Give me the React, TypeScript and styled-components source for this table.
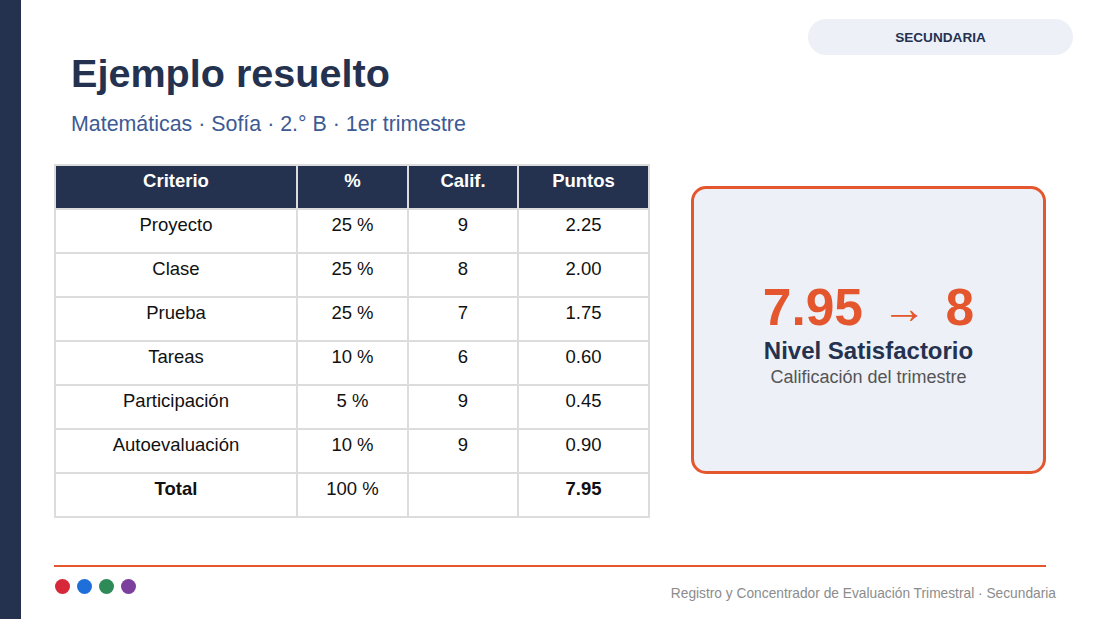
import React from "react";
import styled, { createGlobalStyle } from "styled-components";

const NAVY = "#24324f";
const ORANGE = "#e4572e";

const GlobalStyle = createGlobalStyle`
  html, body { margin: 0; padding: 0; background: #ffffff; }
  body { font-family: "Liberation Sans", Arial, sans-serif; }
  * { box-sizing: border-box; }
`;

const Page = styled.div`
  width: 1100px;
  height: 619px;
  display: flex;
  overflow: hidden;
  background: #ffffff;
`;

const Sidebar = styled.div`
  width: 21px;
  flex: none;
  background: ${NAVY};
`;

const Main = styled.main`
  position: relative;
  flex: 1;
  display: flex;
  flex-direction: column;
  padding: 51px 54px 0 33px;
`;

const Badge = styled.div`
  position: absolute;
  top: 19px;
  right: 27px;
  width: 265px;
  height: 36px;
  border-radius: 18px;
  background: #edf0f7;
  color: ${NAVY};
  font-weight: 700;
  font-size: 13.6px;
  display: flex;
  align-items: center;
  justify-content: center;
`;

const TitleBlock = styled.header`
  padding-left: 17px;
`;

const Title = styled.h1`
  margin: 0;
  font-size: 39.6px;
  line-height: 45px;
  font-weight: 700;
  color: ${NAVY};
`;

const Subtitle = styled.p`
  margin: 16px 0 0;
  font-size: 21.4px;
  line-height: 24px;
  color: #3d5a93;
`;

const Body = styled.section`
  margin-top: 28px;
  display: flex;
  justify-content: space-between;
  align-items: flex-start;
`;

const Table = styled.div`
  display: grid;
  grid-template-columns: 240px 109px 108px 129px;
  grid-auto-rows: 42px;
  gap: 2px;
  padding: 2px;
  background: #dcdcdc;
  width: 596px;
`;

const Cell = styled.div<{ $head?: boolean; $bold?: boolean }>`
  background: ${(p) => (p.$head ? NAVY : "#ffffff")};
  color: ${(p) => (p.$head ? "#ffffff" : "#111111")};
  font-weight: ${(p) => (p.$head || p.$bold ? 700 : 400)};
  font-size: 18.5px;
  line-height: 22px;
  padding-top: 4px;
  text-align: center;
`;

const Card = styled.div`
  margin-top: 22px;
  width: 355px;
  height: 288px;
  border: 3px solid ${ORANGE};
  border-radius: 15px;
  background: #edf0f7;
  display: flex;
  flex-direction: column;
  align-items: center;
  justify-content: center;
  padding-top: 11px;
`;

const Score = styled.div`
  font-size: 51.5px;
  line-height: 53px;
  margin-bottom: 3px;
  font-weight: 700;
  color: ${ORANGE};
  white-space: nowrap;
`;

const Arrow = styled.span`
  font-weight: 400;
  font-size: 44px;
  display: inline-block;
  margin: 0 5px;
  vertical-align: 2px;
`;

const Level = styled.div`
  font-size: 24px;
  line-height: 28.8px;
  font-weight: 700;
  color: ${NAVY};
`;

const Caption = styled.div`
  font-size: 18px;
  line-height: 23.4px;
  color: #555555;
`;

const Rule = styled.div`
  margin-top: 47px;
  height: 2px;
  background: ${ORANGE};
`;

const FooterRow = styled.footer`
  margin-top: 12px;
  margin-right: -10px;
  display: flex;
  justify-content: space-between;
  align-items: flex-start;
`;

const Dots = styled.div`
  display: flex;
  gap: 7px;
  padding-left: 1px;
`;

const Dot = styled.span<{ $color: string }>`
  width: 15px;
  height: 15px;
  border-radius: 50%;
  background: ${(p) => p.$color};
`;

const FooterText = styled.div`
  padding-top: 7px;
  font-size: 13.75px;
  line-height: 16px;
  color: #8c8c8c;
`;

const rows: [string, string, string, string][] = [
  ["Proyecto", "25 %", "9", "2.25"],
  ["Clase", "25 %", "8", "2.00"],
  ["Prueba", "25 %", "7", "1.75"],
  ["Tareas", "10 %", "6", "0.60"],
  ["Participación", "5 %", "9", "0.45"],
  ["Autoevaluación", "10 %", "9", "0.90"],
];

export default function App() {
  return (
    <>
      <GlobalStyle />
      <Page>
        <Sidebar />
        <Main>
          <Badge>SECUNDARIA</Badge>
          <TitleBlock>
            <Title>Ejemplo resuelto</Title>
            <Subtitle>Matemáticas · Sofía · 2.° B · 1er trimestre</Subtitle>
          </TitleBlock>
          <Body>
            <Table>
              {["Criterio", "%", "Calif.", "Puntos"].map((h) => (
                <Cell key={h} $head>
                  {h}
                </Cell>
              ))}
              {rows.map((r) => (
                <React.Fragment key={r[0]}>
                  <Cell>{r[0]}</Cell>
                  <Cell>{r[1]}</Cell>
                  <Cell>{r[2]}</Cell>
                  <Cell>{r[3]}</Cell>
                </React.Fragment>
              ))}
              <Cell $bold>Total</Cell>
              <Cell>100 %</Cell>
              <Cell></Cell>
              <Cell $bold>7.95</Cell>
            </Table>
            <Card>
              <Score>
                7.95 <Arrow>→</Arrow> 8
              </Score>
              <Level>Nivel Satisfactorio</Level>
              <Caption>Calificación del trimestre</Caption>
            </Card>
          </Body>
          <Rule />
          <FooterRow>
            <Dots>
              <Dot $color="#d62839" />
              <Dot $color="#1e6fd9" />
              <Dot $color="#2e8b57" />
              <Dot $color="#7b3f9e" />
            </Dots>
            <FooterText>
              Registro y Concentrador de Evaluación Trimestral · Secundaria
            </FooterText>
          </FooterRow>
        </Main>
      </Page>
    </>
  );
}
